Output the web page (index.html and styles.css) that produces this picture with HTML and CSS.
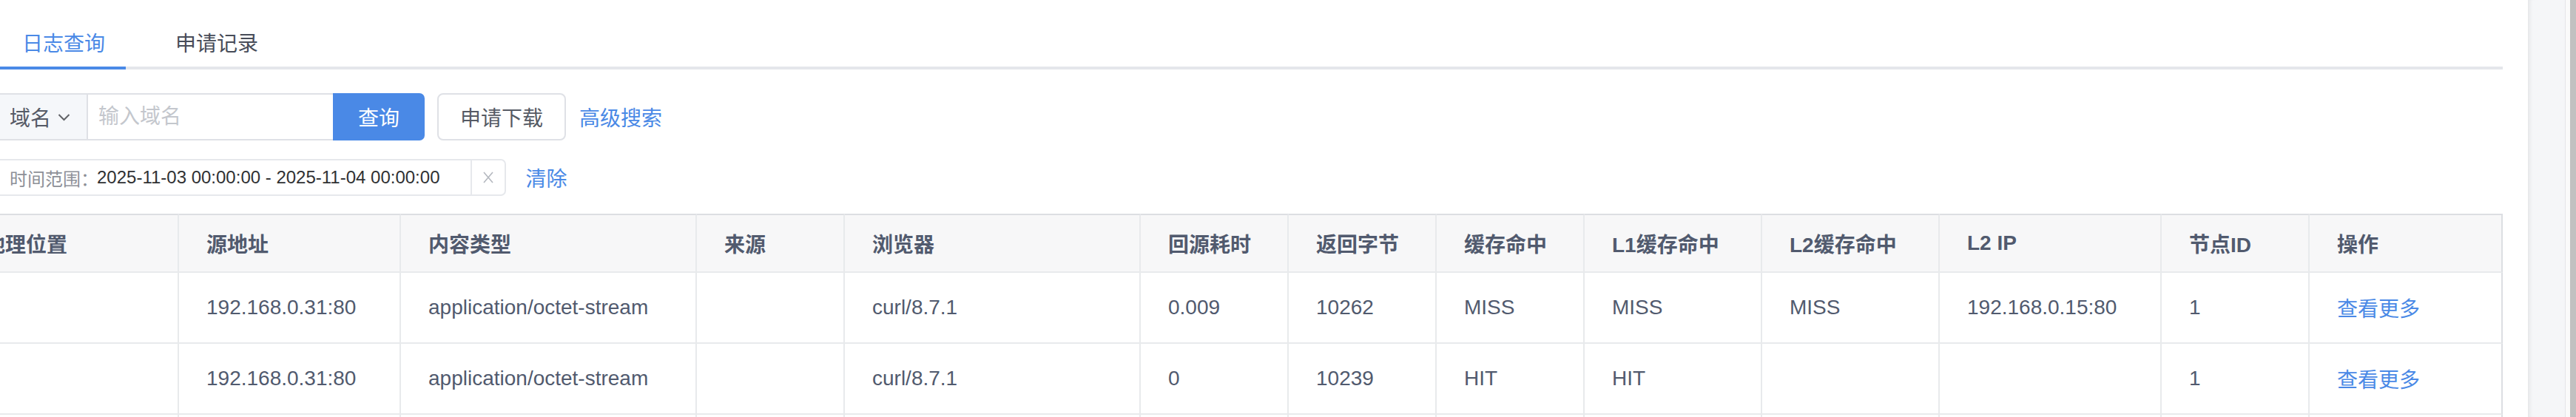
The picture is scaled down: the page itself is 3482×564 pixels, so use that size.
FILE: index.html
```html
<!DOCTYPE html>
<html lang="zh-CN">
<head>
    <meta charset="UTF-8">
    <title>日志查询</title>
    <link rel="stylesheet" href="styles.css">
</head>
<body>
    <div class="main">
        <div class="tabs">
            <div class="tab active">日志查询</div>
            <div class="tab">申请记录</div>
        </div>

        <div class="search-row">
            <div class="search-group">
                <div class="prepend">
                    <span>域名</span>
                    <svg class="chevron" width="17" height="11" viewBox="0 0 17 11">
                        <polyline points="1.5,2 8.5,9 15.5,2" fill="none" stroke="#606266" stroke-width="2"/>
                    </svg>
                </div>
                <input class="domain-input" type="text" placeholder="输入域名">
                <button class="btn-primary">查询</button>
            </div>
            <button class="btn-default">申请下载</button>
            <a class="link" href="#">高级搜索</a>
        </div>

        <div class="date-row">
            <div class="date-box">
                <span class="date-label">时间范围：</span>
                <span class="date-value">2025-11-03 00:00:00 - 2025-11-04 00:00:00</span>
                <span class="date-clear">
                    <svg width="16" height="20" viewBox="0 0 16 20">
                        <path d="M2 3 L14 17 M14 3 L2 17" stroke="#b4b8bf" stroke-width="1.6" fill="none"/>
                    </svg>
                </span>
            </div>
            <a class="link" href="#">清除</a>
        </div>

        <table class="log-table">
            <colgroup>
                <col style="width: 300px">
                <col style="width: 300px">
                <col style="width: 400px">
                <col style="width: 200px">
                <col style="width: 400px">
                <col style="width: 200px">
                <col style="width: 200px">
                <col style="width: 200px">
                <col style="width: 240px">
                <col style="width: 240px">
                <col style="width: 300px">
                <col style="width: 200px">
                <col style="width: 261px">
            </colgroup>
            <thead>
                <tr>
                    <th>地理位置</th>
                    <th>源地址</th>
                    <th>内容类型</th>
                    <th>来源</th>
                    <th>浏览器</th>
                    <th>回源耗时</th>
                    <th>返回字节</th>
                    <th>缓存命中</th>
                    <th>L1缓存命中</th>
                    <th>L2缓存命中</th>
                    <th>L2 IP</th>
                    <th>节点ID</th>
                    <th>操作</th>
                </tr>
            </thead>
            <tbody>
                <tr>
                    <td></td>
                    <td>192.168.0.31:80</td>
                    <td>application/octet-stream</td>
                    <td></td>
                    <td>curl/8.7.1</td>
                    <td>0.009</td>
                    <td>10262</td>
                    <td>MISS</td>
                    <td>MISS</td>
                    <td>MISS</td>
                    <td>192.168.0.15:80</td>
                    <td>1</td>
                    <td><a class="link" href="#">查看更多</a></td>
                </tr>
                <tr>
                    <td></td>
                    <td>192.168.0.31:80</td>
                    <td>application/octet-stream</td>
                    <td></td>
                    <td>curl/8.7.1</td>
                    <td>0</td>
                    <td>10239</td>
                    <td>HIT</td>
                    <td>HIT</td>
                    <td></td>
                    <td></td>
                    <td>1</td>
                    <td><a class="link" href="#">查看更多</a></td>
                </tr>
                <tr>
                    <td></td><td></td><td></td><td></td><td></td><td></td><td></td>
                    <td></td><td></td><td></td><td></td><td></td><td></td>
                </tr>
            </tbody>
        </table>
    </div>

    <div class="aside">
        <div class="aside-panel"></div>
        <div class="scroll-track"></div>
        <div class="scroll-thumb"></div>
    </div>
</body>
</html>
```

FILE: styles.css
```css
html, body {
    height: 100%;
}
body {
    margin: 0;
    display: flex;
    overflow: hidden;
    background: #fff;
    font-family: "Liberation Sans", "Noto Sans CJK SC", sans-serif;
    font-size: 28px;
    color: #515a6e;
}
.main {
    flex: 1;
    min-width: 0;
    padding-top: 29px;
    padding-right: 34px;
    overflow: hidden;
}
.link {
    color: #4a89e6;
    text-decoration: none;
    white-space: nowrap;
}

/* tabs */
.tabs {
    display: flex;
    border-bottom: 4px solid #e4e6eb;
}
.tab {
    line-height: 61px;
    padding: 0 40px 0 67px;
    color: #474c58;
    margin-bottom: -4px;
    border-bottom: 4px solid transparent;
}
.tab.active {
    padding: 0 28px 0 30px;
    color: #4a89e6;
    border-bottom-color: #4a89e6;
}

/* search */
.search-row {
    display: flex;
    align-items: center;
    margin-top: 32px;
    height: 64px;
}
.search-group {
    display: flex;
    height: 64px;
}
.prepend {
    display: flex;
    align-items: center;
    gap: 9px;
    padding: 0 22px 0 13px;
    background: #f5f7fa;
    border: 2px solid #dfe1e6;
    border-left: none;
    color: #555a66;
}
.domain-input {
    width: 331px;
    box-sizing: border-box;
    border: 2px solid #dfe1e6;
    border-left: none;
    border-right: none;
    padding: 0 14px;
    font: inherit;
    color: #606266;
    outline: none;
}
.domain-input::placeholder {
    color: #c4c7cd;
}
.btn-primary {
    width: 124px;
    border: none;
    border-radius: 0 7px 7px 0;
    background: #4a89e6;
    color: #fff;
    font: inherit;
}
.btn-default {
    margin-left: 17px;
    width: 174px;
    height: 64px;
    background: #fff;
    border: 2px solid #dfe1e6;
    border-radius: 8px;
    color: #555a64;
    font: inherit;
}
.search-row .link {
    margin-left: 18px;
}

/* date range */
.date-row {
    display: flex;
    align-items: center;
    margin-top: 25px;
}
.date-box {
    display: flex;
    align-items: center;
    height: 46px;
    border: 2px solid #e6e8ec;
    border-left: none;
    border-radius: 0 7px 7px 0;
    font-size: 24px;
}
.date-label {
    padding-left: 13px;
    color: #8d9097;
}
.date-value {
    margin-left: -2px;
    padding-right: 42px;
    color: #303133;
}
.date-clear {
    display: flex;
    align-items: center;
    justify-content: center;
    width: 44px;
    height: 100%;
    border-left: 2px solid #e6e8ec;
}
.date-row .link {
    margin-left: 26px;
}

/* table */
.log-table {
    margin-top: 24px;
    margin-left: -58px;
    width: 3441px;
    table-layout: fixed;
    border-collapse: separate;
    border-spacing: 0;
}
.log-table th,
.log-table td {
    box-sizing: border-box;
    padding: 0 10px 0 37px;
    text-align: left;
    white-space: nowrap;
    overflow: hidden;
    border-right: 2px solid #e8eaec;
    border-bottom: 2px solid #e8eaec;
}
.log-table th:last-child,
.log-table td:last-child {
    border-right-color: #dcdee2;
}
.log-table th {
    height: 80px;
    background: #f7f7f8;
    border-top: 2px solid #dcdee2;
    font-weight: bold;
    color: #515a6e;
}
.log-table td {
    height: 96px;
    color: #515a6e;
}

/* right side */
.aside {
    display: flex;
    width: 65px;
    flex-shrink: 0;
}
.aside-panel {
    width: 50px;
    background: #f5f6f8;
    box-shadow: inset 7px 0 6px -5px rgba(0, 0, 0, 0.08);
    border-right: 1px solid #e4e5e8;
}
.scroll-track {
    width: 6px;
    background: #fafafa;
}
.scroll-thumb {
    width: 8px;
    background: #c1c1c1;
}
```
